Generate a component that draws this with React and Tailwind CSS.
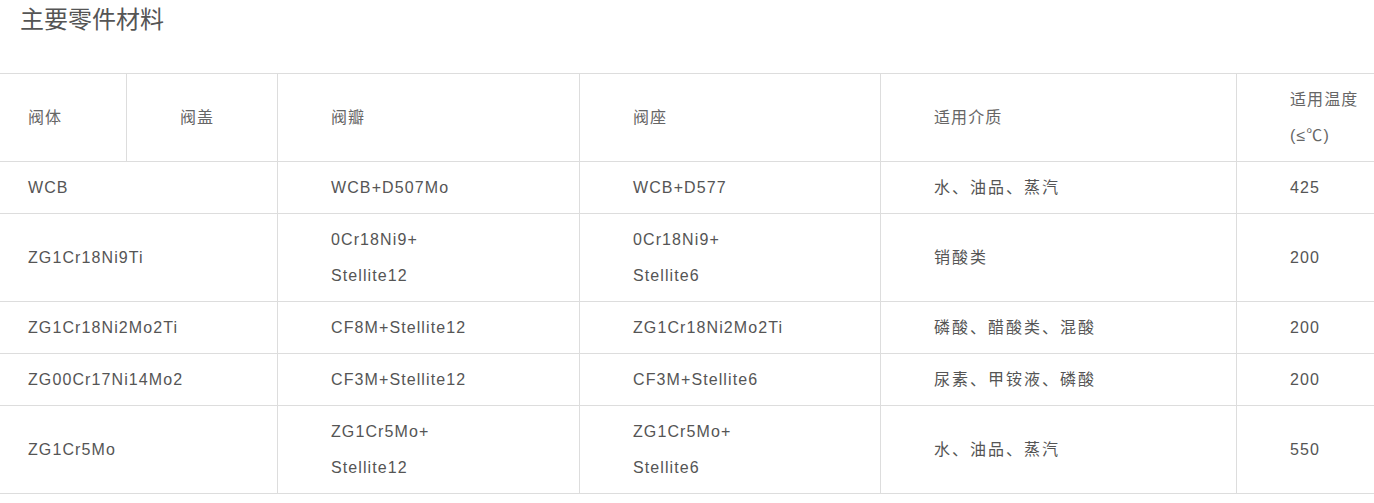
import React from "react";

const FONT = { fontFamily: '"Liberation Sans", Arial, "Noto Sans CJK SC", sans-serif' };

const header = [
  { t: ["阀体"], first: true },
  { t: ["阀盖"] },
  { t: ["阀瓣"] },
  { t: ["阀座"] },
  { t: ["适用介质"] },
  { t: ["适用温度", "(≤℃)"] },
];

const rows = [
  [["WCB"], ["WCB+D507Mo"], ["WCB+D577"], ["水、油品、蒸汽"], ["425"]],
  [["ZG1Cr18Ni9Ti"], ["0Cr18Ni9+", "Stellite12"], ["0Cr18Ni9+", "Stellite6"], ["销酸类"], ["200"]],
  [["ZG1Cr18Ni2Mo2Ti"], ["CF8M+Stellite12"], ["ZG1Cr18Ni2Mo2Ti"], ["磷酸、醋酸类、混酸"], ["200"]],
  [["ZG00Cr17Ni14Mo2"], ["CF3M+Stellite12"], ["CF3M+Stellite6"], ["尿素、甲铵液、磷酸"], ["200"]],
  [["ZG1Cr5Mo"], ["ZG1Cr5Mo+", "Stellite12"], ["ZG1Cr5Mo+", "Stellite6"], ["水、油品、蒸汽"], ["550"]],
];

function Cell({ lines, first, span2, head, cjk }) {
  return (
    <div
      className={
        "flex items-center border-b border-[#dddddd] pt-[8px] pb-[7px] leading-[36px] " +
        (first ? "pl-[28px] " : "border-l pl-[53px] ") +
        (span2 ? "col-span-2 " : "") +
        (cjk ? "tracking-[2px] " : "tracking-[1.1px] ") +
        (head ? "text-[#666666]" : "text-[#555555]")
      }
    >
      <div>
        {lines.map((l, i) => (
          <div key={i}>{l}</div>
        ))}
      </div>
    </div>
  );
}

export default function App() {
  return (
    <div className="w-[1374px] bg-white" style={FONT}>
      <div className="h-[40px] pl-[20px] text-[24px] leading-[40px] text-[#555555]">主要零件材料</div>
      <div className="mt-[33px] grid grid-cols-[126px_151px_302px_301px_356px_138px] border-t border-[#dddddd] text-[16px]">
        {header.map((h, i) => (
          <Cell key={i} lines={h.t} first={h.first} head />
        ))}
        {rows.map((r, ri) => (
          <React.Fragment key={ri}>
            {r.map((c, ci) => (
              <Cell key={ci} lines={c} first={ci === 0} span2={ci === 0} cjk={ci === 3} />
            ))}
          </React.Fragment>
        ))}
      </div>
    </div>
  );
}
